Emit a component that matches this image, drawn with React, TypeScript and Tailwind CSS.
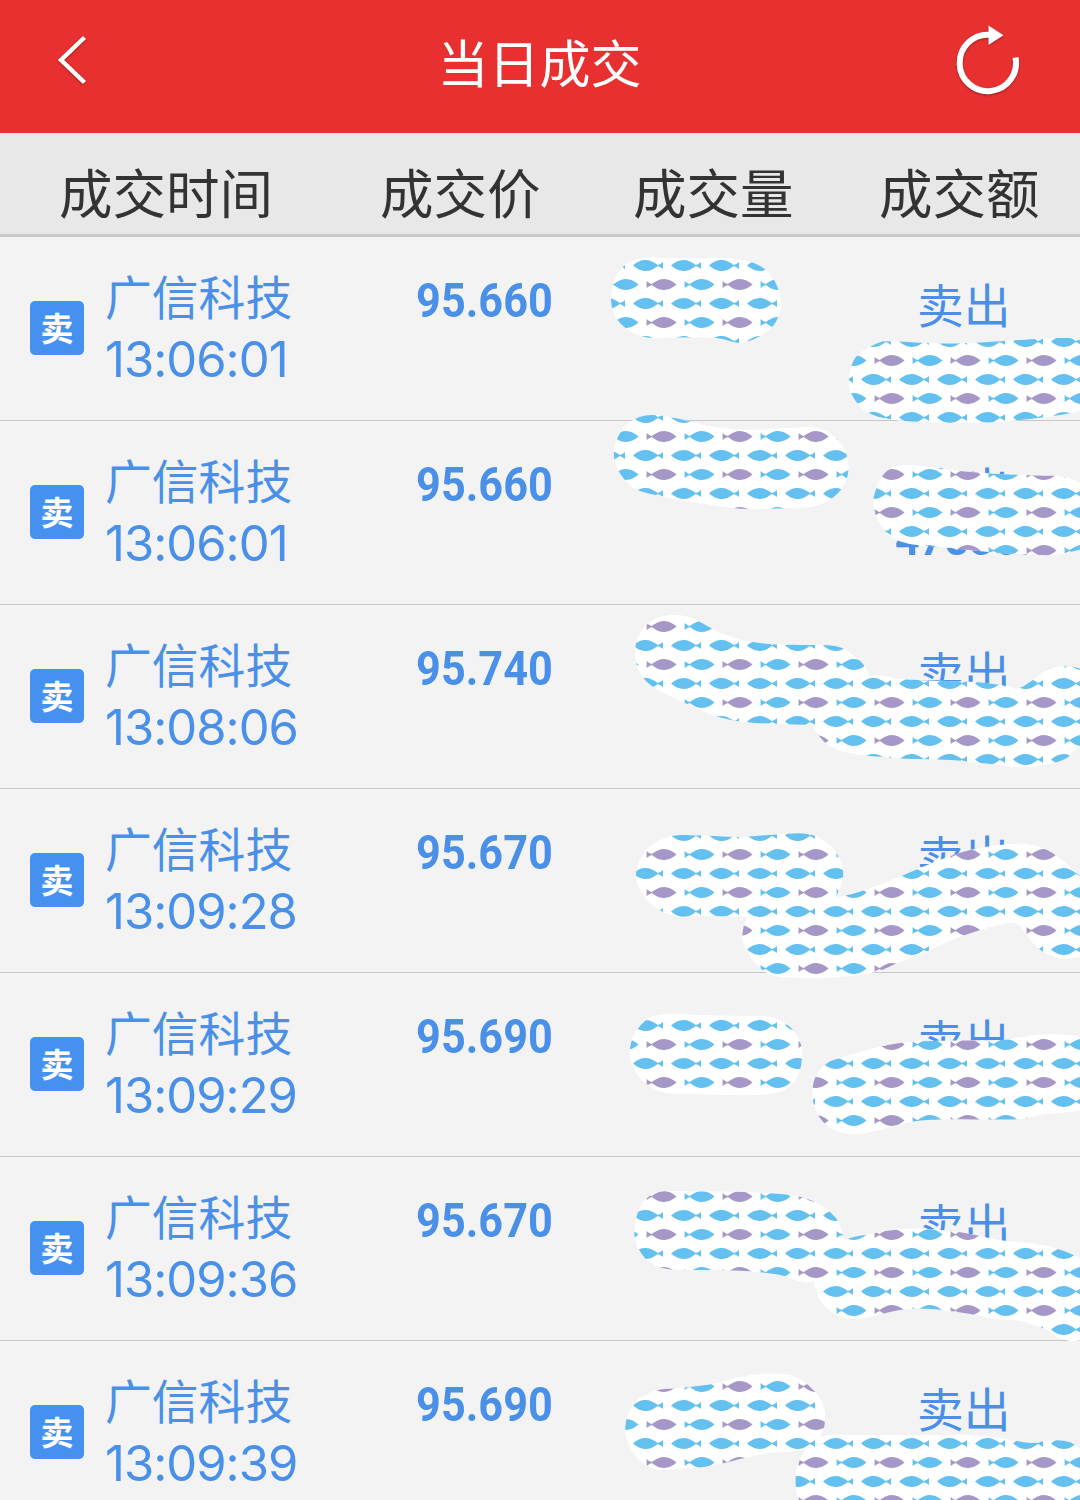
type Trade = { name: string; time: string; price: string; amount: string };
type Point = [number, number];

const trades: Trade[] = [
    { name: '广信科技', time: '13:06:01', price: '95.660', amount: '' },
    { name: '广信科技', time: '13:06:01', price: '95.660', amount: '47830.0' },
    { name: '广信科技', time: '13:08:06', price: '95.740', amount: '' },
    { name: '广信科技', time: '13:09:28', price: '95.670', amount: '' },
    { name: '广信科技', time: '13:09:29', price: '95.690', amount: '' },
    { name: '广信科技', time: '13:09:36', price: '95.670', amount: '' },
    { name: '广信科技', time: '13:09:39', price: '95.690', amount: '' },
];

// Outlines of the brush strokes that hide the volumes and amounts
const strokes: Point[][] = [
    [[640, 258.5], [690, 258.5], [738, 259], [767, 271], [780.5, 298], [773, 326], [744, 342.5], [716, 338], [680, 337.5], [645, 337], [620, 323], [611, 300], [618, 273]],
    [[878, 343], [894, 341.5], [940, 343.5], [980, 342.5], [1020, 340], [1060, 338], [1080, 340], [1100, 350], [1100, 400], [1078, 411], [1060, 415], [1020, 420], [985, 422.5], [940, 422.5], [895, 420], [867, 412], [852, 395], [849, 378], [856, 357]],
    [[652, 415], [675, 418], [710, 426], [745, 430], [790, 428], [815, 427.5], [835, 437], [847, 456], [847, 478], [835, 496], [815, 506], [790, 508], [745, 509], [705, 504], [660, 496], [634, 488], [618, 470], [614, 450], [622, 430], [635, 419]],
    [[908, 465], [935, 468], [965, 471.5], [1000, 474], [1035, 475.5], [1065, 477], [1085, 488], [1100, 520], [1090, 545], [1060, 554], [1040, 555], [1000, 553], [970, 550], [940, 547], [910, 544], [890, 536], [877, 518], [873.5, 500], [880, 480], [890, 469]],
    [[674, 615], [692, 618], [715, 630], [740, 639.5], [770, 644], [800, 645], [835, 646], [853, 655], [866, 668], [870, 682], [870, 700], [850, 720], [815, 724.5], [780, 724], [745, 722], [715, 716], [685, 703], [655, 688], [640, 673], [635, 652], [640, 633], [655, 619]],
    [[869, 676], [900, 679], [930, 680.5], [975, 682], [1000, 685], [1018, 688], [1030, 682], [1045, 671], [1060, 666.5], [1078, 668], [1100, 680], [1100, 730], [1078, 748], [1065, 759], [1045, 765], [1020, 767], [990, 764], [950, 760], [900, 758.5], [855, 754], [833, 748], [820, 737], [815, 724], [830, 700]],
    [[672, 836], [700, 835.5], [740, 837], [775, 834.5], [808, 834], [830, 845], [841, 862], [843, 878], [838, 892], [830, 905], [790, 916], [700, 916], [675, 916], [652, 905], [638, 885], [637, 868], [648, 848]],
    [[838, 897], [865, 890], [892, 880], [921, 867.5], [945, 858], [970, 850], [1000, 845], [1025, 844], [1045, 849], [1062, 860], [1075, 872], [1090, 885], [1110, 920], [1095, 955], [1080, 957], [1062, 958.5], [1045, 953], [1032, 942], [1025, 932], [1015, 923], [1000, 925], [965, 935], [930, 950], [900, 962], [875, 972], [840, 977], [810, 978], [775, 976], [757, 965], [744, 945], [743, 930], [748, 917], [760, 905], [800, 900]],
    [[668, 1014], [700, 1015], [740, 1016], [770, 1017], [790, 1027], [801, 1045], [800, 1070], [788, 1088], [765, 1094.5], [730, 1095], [690, 1094], [662, 1092], [640, 1078], [630, 1056], [634, 1035], [648, 1019]],
    [[840, 1058], [875, 1048], [900, 1043], [930, 1041], [1000, 1040], [1015, 1038], [1035, 1035], [1060, 1034.5], [1085, 1040], [1105, 1070], [1090, 1105], [1065, 1112.5], [1045, 1114], [1020, 1119], [980, 1119.5], [940, 1119.5], [910, 1122], [880, 1130], [855, 1134.5], [832, 1129], [818, 1115], [812.5, 1097], [815, 1078], [826, 1064]],
    [[670, 1191], [705, 1191.5], [745, 1192], [790, 1195], [817, 1203], [835, 1217], [842, 1232], [845, 1245], [850, 1262], [814, 1281], [798, 1281], [780, 1275], [745, 1271], [700, 1270], [668, 1269], [648, 1261], [636, 1243], [635, 1225], [641, 1205], [653, 1194]],
    [[843, 1241], [875, 1233], [905, 1229], [940, 1230], [965, 1233], [1000, 1240], [1030, 1243], [1055, 1248], [1080, 1258], [1110, 1275], [1115, 1320], [1080, 1340], [1060, 1338], [1045, 1329], [1020, 1321], [995, 1319], [970, 1314], [930, 1309], [900, 1310], [875, 1316], [853, 1319], [835, 1314], [820, 1300], [814, 1281], [818, 1262]],
    [[656, 1390.5], [680, 1388], [712, 1384], [740, 1377], [765, 1374], [790, 1375], [808, 1385], [822, 1402], [825, 1420], [820, 1436], [800, 1450], [765, 1453.5], [745, 1458], [710, 1466], [680, 1469], [655, 1469], [638, 1459], [627, 1440], [626, 1422], [635, 1402]],
    [[830, 1435], [870, 1435], [920, 1435], [970, 1435], [1000, 1438], [1030, 1443], [1045, 1441], [1065, 1441], [1080, 1450], [1110, 1490], [1100, 1530], [820, 1530], [802, 1508], [796, 1488], [797, 1468], [805, 1450], [815, 1439]],
];

// Closed Catmull-Rom curve through the points
const smooth = (pts: Point[]) => {
    const n = pts.length;
    let d = `M${pts[0][0]} ${pts[0][1]}`;
    for (let i = 0; i < n; i++) {
        const a = pts[(i + n - 1) % n];
        const b = pts[i];
        const c = pts[(i + 1) % n];
        const e = pts[(i + 2) % n];
        d += `C${b[0] + (c[0] - a[0]) / 6} ${b[1] + (c[1] - a[1]) / 6} ${c[0] - (e[0] - b[0]) / 6} ${c[1] - (e[1] - b[1]) / 6} ${c[0]} ${c[1]}`;
    }
    return d + 'Z';
};

const outline = strokes.map(smooth).join('');

const Fish = ({ x, y, flip = false, color }: { x: number; y: number; flip?: boolean; color: string }) => (
    <path
        transform={`translate(${x} ${y})${flip ? ' scale(-1 1)' : ''}`}
        fill={color}
        d="M0 0C4 -3.4 8 -5.5 12.4 -5.5C17 -5.5 21 -3.4 24.8 -0.4Q27.5 -1.2 30 -3.6V3.6Q27.5 1.2 24.8 0.4C21 3.4 17 5.5 12.4 5.5C8 5.5 4 3.4 0 0Z"
    />
);

const MaskLayer = () => (
    <svg className="pointer-events-none absolute inset-0" width="1080" height="1500" viewBox="0 0 1080 1500">
        <defs>
            <pattern id="fish" x="644" y="256" width="76" height="38" patternUnits="userSpaceOnUse">
                <Fish x={-11} y={9.5} color="#64c0ef" />
                <Fish x={27} y={9.5} color="#64c0ef" />
                <Fish x={65} y={9.5} color="#64c0ef" />
                <Fish x={32.6} y={28.5} flip color="#a597c8" />
                <Fish x={70.6} y={28.5} flip color="#64c0ef" />
            </pattern>
        </defs>
        <path d={outline} fill="#fff" />
        <path d={outline} fill="url(#fish)" />
    </svg>
);

const TopBar = () => (
    <header className="flex h-[133px] items-start justify-between bg-[#e93030] text-white">
        <svg className="ml-[50px] mt-[30px] drop-shadow-[0_1px_1px_rgba(0,0,0,0.35)]" width="50" height="60" viewBox="0 0 50 60" fill="none" stroke="currentColor" strokeWidth="4.4">
            <path d="M34.5 7.5L11 30L34.5 52.5" />
        </svg>
        <h1 className="ml-[29px] mt-[25px] text-[51px] leading-[72px]">当日成交</h1>
        <svg className="mr-[50px] mt-[20px] drop-shadow-[0_1px_1px_rgba(0,0,0,0.35)]" width="80" height="80" viewBox="0 0 80 80">
            <path d="M65.5 37.5A28.2 28.2 0 1 1 39 14.8" fill="none" stroke="currentColor" strokeWidth="6" />
            <path d="M38.5 5.5L53.5 15.3L38.5 25Z" fill="currentColor" />
        </svg>
    </header>
);

const ColumnHeader = () => (
    <div className="flex h-[104px] border-b-[3px] border-[#c9c9c9] bg-[#e8e8e8] pt-[19px] text-[53.5px] leading-[78px] text-[#333]">
        <span className="ml-[59px] w-[321px]">成交时间</span>
        <span className="w-[253px]">成交价</span>
        <span className="w-[246px]">成交量</span>
        <span>成交额</span>
    </div>
);

const TradeRow = ({ trade }: { trade: Trade }) => (
    <div className="flex h-[184px] shrink-0 border-b border-[#c8c8c8] text-[#4a90e8]">
        <div className="ml-[30px] mt-[64px] flex size-[54px] items-center justify-center rounded-[5px] bg-[#4691ef] pb-px text-[33px] font-bold leading-none text-white">
            卖
        </div>
        <div className="ml-[21px] w-[311px] pt-[27px]">
            <div className="text-[46.8px] leading-[62px]">{trade.name}</div>
            <div className="mt-1 font-['Inter'] text-[49px] leading-[60px] tracking-[-1px]">{trade.time}</div>
        </div>
        <div className="w-[434px] origin-left scale-x-90 pt-[34px] font-['Roboto'] text-[48px] font-bold leading-[60px] tracking-[0.1px]">
            {trade.price}
        </div>
        <div className="w-[230px] pl-[45px] pt-[43px]">
            <div className="pl-[22px] text-[46.8px] leading-[46px]">卖出</div>
            {trade.amount && (
                <div className="mt-[5px] origin-left scale-x-90 font-['Roboto'] text-[48px] font-bold leading-[48px]">
                    {trade.amount}
                </div>
            )}
        </div>
    </div>
);

export default function App() {
    return (
        <div className="relative h-[1500px] w-[1080px] overflow-hidden bg-[#f3f3f3] font-['Noto_Sans_CJK_SC',sans-serif]">
            <TopBar />
            <ColumnHeader />
            <div className="flex flex-col">
                {trades.map((trade, i) => (
                    <TradeRow key={i} trade={trade} />
                ))}
            </div>
            <MaskLayer />
        </div>
    );
}
